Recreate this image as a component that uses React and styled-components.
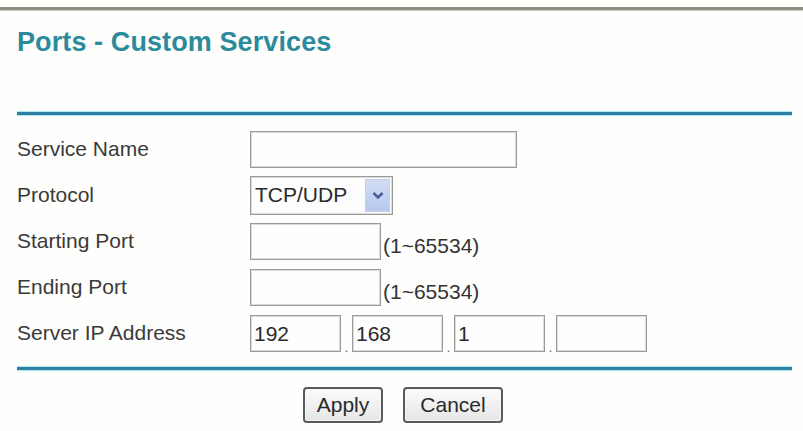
import React from "react";
import styled, { createGlobalStyle } from "styled-components";

const Global = createGlobalStyle`
  html, body { margin: 0; padding: 0; background: #fefefc; }
  body { font-family: "Liberation Sans", Arial, sans-serif; }
  * { box-sizing: border-box; }
`;

const Page = styled.div`
  width: 803px;
  height: 431px;
  overflow: hidden;
  background: #fefefc;
  padding-top: 7px;
`;

const TopRule = styled.div`
  height: 3px;
  background: #8e8d80;
  box-shadow: 0 1px 1px #c9c8bc;
`;

const Title = styled.h1`
  margin: 17px 0 0 17px;
  font-size: 27px;
  line-height: 30px;
  font-weight: bold;
  color: #2b8b9d;
  letter-spacing: 0.1px;
`;

const BlueRule = styled.div`
  height: 3px;
  margin: ${(p) => p.$top}px 11px 0 17px;
  background: #2f7fa0;
  box-shadow: 0 -1px 1px #a9e6f2, 0 1px 1px #a9e6f2;
`;

const Form = styled.div`
  margin: 11px 0 0 17px;
  display: grid;
  grid-template-columns: 233px 1fr;
  grid-auto-rows: 46px;
  align-items: center;
`;

const Label = styled.div`
  font-size: 21px;
  color: #3a3a3a;
`;

const Field = styled.div`
  display: flex;
  align-items: center;
`;

const Input = styled.input`
  width: ${(p) => p.$w}px;
  height: 37px;
  border: 1px solid #9a9a9a;
  box-shadow: inset 0 0 0 1px #dcdcdc;
  background: #fdfdfd;
  font-family: "Liberation Sans", Arial, sans-serif;
  font-size: 21px;
  color: #2a2a2a;
  padding: 2px 3px 0;
  outline: none;
  margin: 0;
`;

const Range = styled.span`
  align-self: flex-end;
  font-size: 21px;
  color: #333;
  margin-left: 2px;
  line-height: 22px;
  padding-bottom: 3px;
`;

const SelectBox = styled.div`
  width: 143px;
  height: 39px;
  border: 1px solid #9a9a9a;
  box-shadow: inset 0 0 0 1px #dcdcdc;
  background: #fdfdfd;
  display: flex;
  align-items: center;
  justify-content: space-between;
  padding: 2px 2px 2px 4px;
`;

const SelectText = styled.span`
  font-size: 21px;
  color: #2a2a2a;
`;

const ArrowBtn = styled.div`
  width: 25px;
  height: 33px;
  background: linear-gradient(#d2dcf4, #b7c7ee);
  border: 1px solid #c4cfe9;
  display: flex;
  align-items: center;
  justify-content: center;
`;

const IpRow = styled.div`
  display: flex;
  align-items: flex-end;
`;

const Dot = styled.span`
  width: 11px;
  text-align: center;
  font-size: 14px;
  line-height: 10px;
  color: #777;
`;

const Buttons = styled.div`
  margin-top: 17px;
  display: flex;
  justify-content: center;
  gap: 20px;
  padding-left: 3px;
`;

const Button = styled.button`
  width: ${(p) => p.$w}px;
  height: 36px;
  border: 2px solid #5a5a5a;
  border-radius: 4px;
  background: linear-gradient(#fbfbfb, #e6e6e6);
  font-family: "Liberation Sans", Arial, sans-serif;
  font-size: 21px;
  color: #2a2a2a;
  padding: 0;
  box-shadow: inset 0 0 0 1px #f4f4f4;
`;

const Chevron = () => (
  <svg width="12" height="9" viewBox="0 0 12 9">
    <path d="M1.5 2 L6 6.5 L10.5 2" fill="none" stroke="#4a5d96" strokeWidth="2.6" />
  </svg>
);

export default function App() {
  return (
    <Page>
      <Global />
      <TopRule />
      <Title>Ports - Custom Services</Title>
      <BlueRule $top={55} />
      <Form>
        <Label>Service Name</Label>
        <Field>
          <Input $w={267} defaultValue="" />
        </Field>
        <Label>Protocol</Label>
        <Field>
          <SelectBox>
            <SelectText>TCP/UDP</SelectText>
            <ArrowBtn>
              <Chevron />
            </ArrowBtn>
          </SelectBox>
        </Field>
        <Label>Starting Port</Label>
        <Field>
          <Input $w={131} defaultValue="" />
          <Range>(1~65534)</Range>
        </Field>
        <Label>Ending Port</Label>
        <Field>
          <Input $w={131} defaultValue="" />
          <Range>(1~65534)</Range>
        </Field>
        <Label>Server IP Address</Label>
        <Field>
          <IpRow>
            <Input $w={91} defaultValue="192" />
            <Dot>.</Dot>
            <Input $w={91} defaultValue="168" />
            <Dot>.</Dot>
            <Input $w={91} defaultValue="1" />
            <Dot>.</Dot>
            <Input $w={91} defaultValue="" />
          </IpRow>
        </Field>
      </Form>
      <BlueRule $top={11} />
      <Buttons>
        <Button $w={80}>Apply</Button>
        <Button $w={100}>Cancel</Button>
      </Buttons>
    </Page>
  );
}
